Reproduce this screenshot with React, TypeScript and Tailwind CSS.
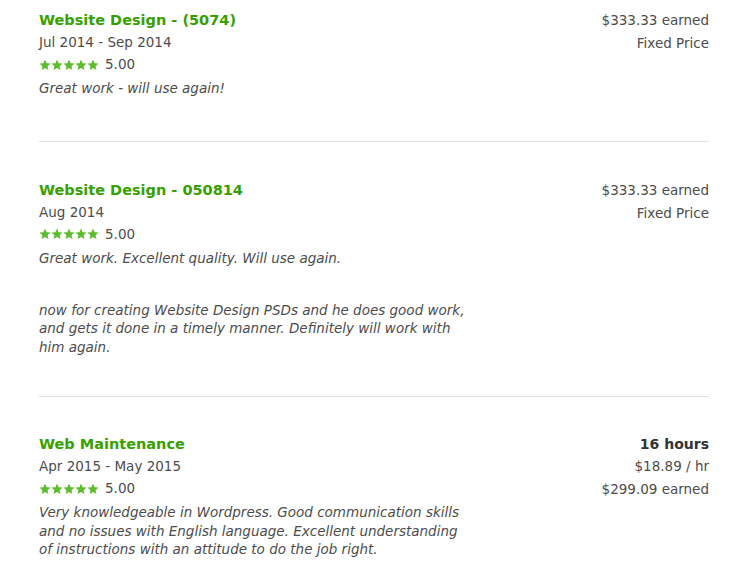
import React from 'react';

const font = { fontFamily: '"DejaVu Sans", "Open Sans", sans-serif' };

function Stars() {
  return (
    <div className="flex items-center">
      {Array.from({ length: 5 }, (_, i) => (
        <svg key={i} width="12" height="12" viewBox="0 0 24 24" className="fill-[#5bbd2b]">
          <path d="M12 1l3.2 7.3 7.9.7-6 5.3 1.8 7.8L12 18l-6.9 4.1 1.8-7.8-6-5.3 7.9-.7z" />
        </svg>
      ))}
    </div>
  );
}

type Job = {
  title: string;
  dates: string;
  comments: string[];
  right: { text: string; bold?: boolean }[];
  pt: string;
  pb: string;
};

const jobs: Job[] = [
  {
    title: 'Website Design - (5074)',
    dates: 'Jul 2014 - Sep 2014',
    comments: ['Great work - will use again!'],
    right: [{ text: '$333.33 earned' }, { text: 'Fixed Price' }],
    pt: 'pt-0',
    pb: 'pb-[43px]',
  },
  {
    title: 'Website Design - 050814',
    dates: 'Aug 2014',
    comments: [
      'Great work. Excellent quality. Will use again.',
      'now for creating Website Design PSDs and he does good work, and gets it done in a timely manner. Definitely will work with him again.',
    ],
    right: [{ text: '$333.33 earned' }, { text: 'Fixed Price' }],
    pt: 'pt-[37px]',
    pb: 'pb-[40px]',
  },
  {
    title: 'Web Maintenance',
    dates: 'Apr 2015 - May 2015',
    comments: [
      'Very knowledgeable in Wordpress. Good communication skills and no issues with English language. Excellent understanding of instructions with an attitude to do the job right.',
    ],
    right: [{ text: '16 hours', bold: true }, { text: '$18.89 / hr' }, { text: '$299.09 earned' }],
    pt: 'pt-[36px]',
    pb: 'pb-4',
  },
];

function JobRow({ job, last }: { job: Job; last: boolean }) {
  return (
    <div className={`flex justify-between ${job.pt} ${job.pb} ${last ? '' : 'border-b border-[#e0e0e0]'}`}>
      <div className="w-[430px]">
        <h4 className="text-[14.5px] font-bold text-[#37a000] leading-[22px]">{job.title}</h4>
        <div className="text-[13.5px] text-[#4c4c4c] leading-[22px]">{job.dates}</div>
        <div className="flex items-center gap-[6px] h-[23px]">
          <Stars />
          <span className="text-[13.5px] text-[#4c4c4c]">5.00</span>
        </div>
        {job.comments.map((c, i) => (
          <p
            key={i}
            className={`text-[13.5px] italic text-[#4c4c4c] leading-[18.5px] ${i > 0 ? 'mt-[33.5px]' : 'mt-[3px]'}`}
          >
            {c}
          </p>
        ))}
      </div>
      <div className="text-right">
        {job.right.map((r, i) => (
          <div
            key={i}
            className={r.bold ? 'text-[14px] font-bold text-[#333] leading-[22px]' : 'text-[13.5px] text-[#4c4c4c] leading-[23px]'}
          >
            {r.text}
          </div>
        ))}
      </div>
    </div>
  );
}

export default function App() {
  return (
    <div className="bg-white min-h-[570px] pl-[39px] pr-[40px] pt-[9px]" style={font}>
      {jobs.map((job, i) => (
        <JobRow key={i} job={job} last={i === jobs.length - 1} />
      ))}
    </div>
  );
}
